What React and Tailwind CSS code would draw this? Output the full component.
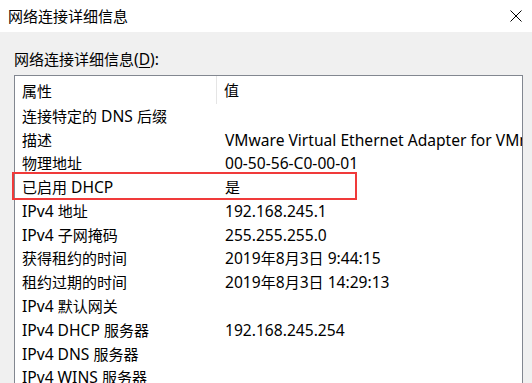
function T({ children }) {
  const parts = String(children).split(/([\u3000-\u9fff\uff00-\uffef]+)/).filter(Boolean);
  return (
    <>
      {parts.map((p, i) =>
        /[\u3000-\u9fff\uff00-\uffef]/.test(p) ? (
          <span key={i} className="text-[15px]" style={{ fontFamily: '"Noto Sans CJK SC",sans-serif' }}>{p}</span>
        ) : (
          <span key={i} className="text-[15.6px]" style={{ fontFamily: '"Noto Sans",sans-serif' }}>{p}</span>
        )
      )}
    </>
  );
}

export default function App() {
  const rows = [
    ["连接特定的 DNS 后缀", ""],
    ["描述", "VMware Virtual Ethernet Adapter for VMnet8"],
    ["物理地址", "00-50-56-C0-00-01"],
    ["已启用 DHCP", "是"],
    ["IPv4 地址", "192.168.245.1"],
    ["IPv4 子网掩码", "255.255.255.0"],
    ["获得租约的时间", "2019年8月3日 9:44:15"],
    ["租约过期的时间", "2019年8月3日 14:29:13"],
    ["IPv4 默认网关", ""],
    ["IPv4 DHCP 服务器", "192.168.245.254"],
    ["IPv4 DNS 服务器", ""],
    ["IPv4 WINS 服务器", ""],
  ];
  const font = { fontFamily: '"Noto Sans","Noto Sans CJK SC",sans-serif' };
  return (
    <div className="w-[532px] h-[383px] overflow-hidden bg-[#f0f0f0] text-black text-[15px] leading-none relative" style={font}>
      <div className="h-[32px] bg-white flex items-center justify-between pl-[8px] pr-[9px]">
        <span><T>网络连接详细信息</T></span>
        <svg width="12" height="12" viewBox="0 0 12 12" className="mr-[1px]">
          <path d="M0.5 0.5 L11.5 11.5 M11.5 0.5 L0.5 11.5" stroke="#000" strokeWidth="1" fill="none" />
        </svg>
      </div>
      <div className="pl-[14px] pr-[9px] pt-[19px]">
        <div className="h-[24px] whitespace-nowrap">
          <T>网络连接详细信息</T><T>(</T><span className="underline underline-offset-2"><T>D</T></span><T>):</T>
        </div>
        <div className="border border-[#828790] bg-white h-[320px] overflow-hidden relative">
          <div className="flex h-[28px] items-center">
            <div className="w-[202px] shrink-0 pl-[7px] h-full flex items-center border-r border-[#e5e5e5]"><T>属性</T></div>
            <div className="pl-[7px]"><T>值</T></div>
          </div>
          {rows.map(([k, v], i) => (
            <div key={i} className="flex h-[23.77px] items-center whitespace-nowrap">
              <div className="w-[202px] shrink-0 pl-[7px] leading-[22px]"><T>{k}</T></div>
              <div className="pl-[8px] flex-1 min-w-0 overflow-hidden leading-[22px]">{v ? <T>{v}</T> : null}</div>
            </div>
          ))}
        </div>
      </div>
      <div className="absolute left-[12px] top-[172px] w-[345px] h-[28px] border-2 border-[#f03a3a]" />
    </div>
  );
}
